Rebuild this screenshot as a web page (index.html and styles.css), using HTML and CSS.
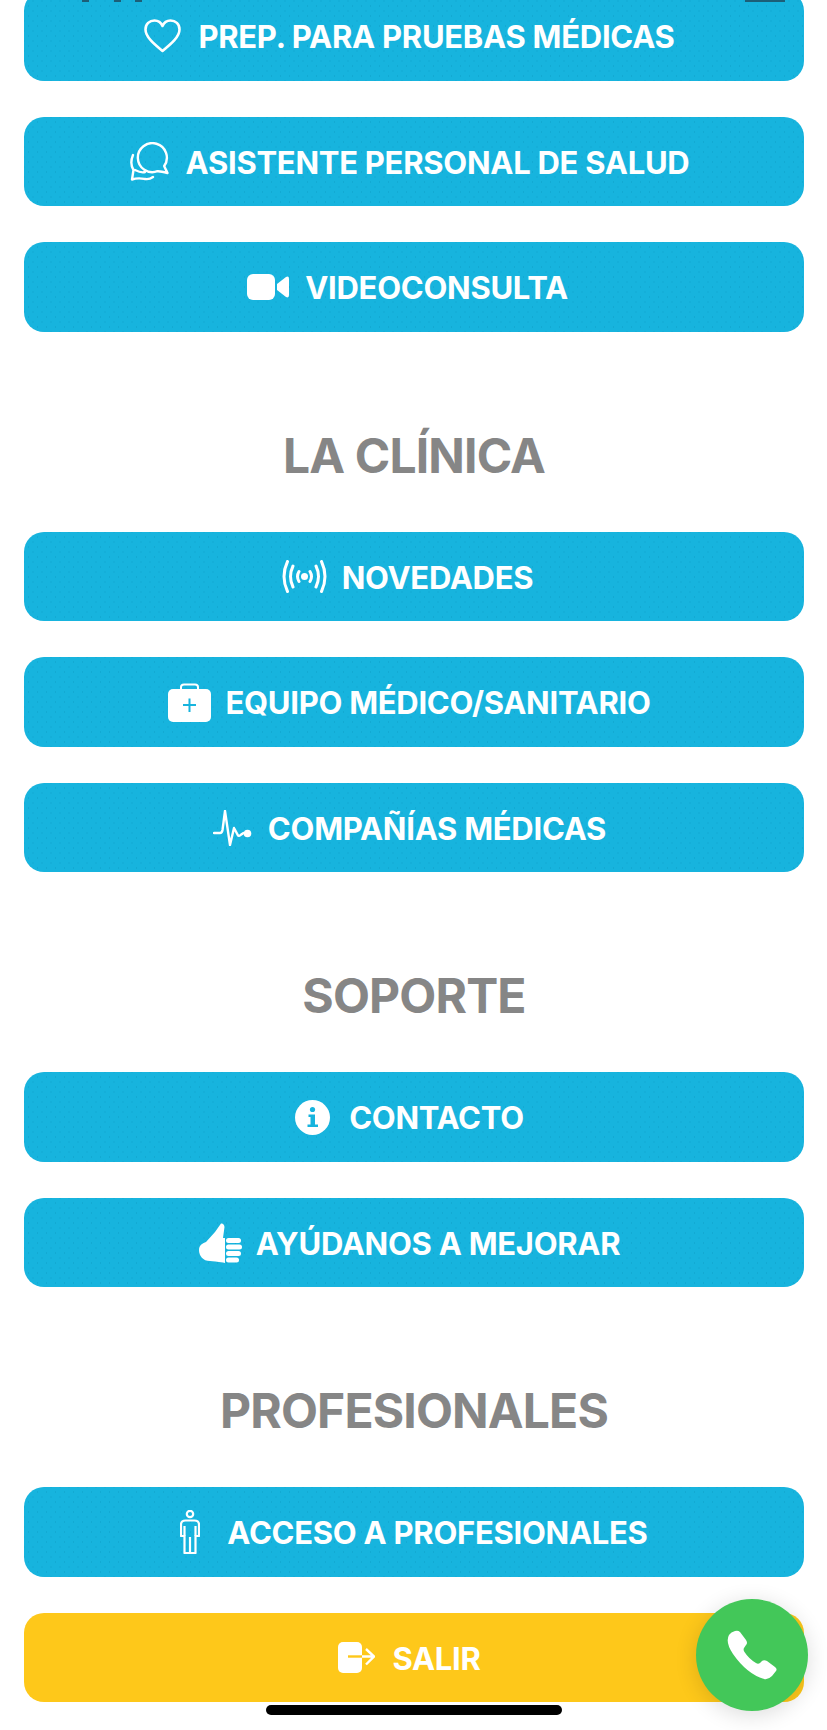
FILE: index.html
```html
<!DOCTYPE html>
<html>
<head>
  <title>Menu</title>
  <link rel="stylesheet" href="styles.css">
</head>
<body>
  <div class="status-bits">
    <span class="bit bit-a"></span>
    <span class="bit bit-b"></span>
    <span class="bit bit-c"></span>
    <span class="bit bit-battery"></span>
  </div>

  <div class="menu">
    <div class="group">
      <a class="btn" href="#">
        <svg width="37" height="34" viewBox="0 0 37 34" fill="none" stroke="#fff" stroke-width="2.600" stroke-linejoin="round"><path d="M18.5 32C10 25 1.5 18 1.5 10.5 1.5 5 5.5 1.5 10.5 1.5c3.500 0 6.500 2 8 5.500 1.500-3.500 4.500-5.500 8-5.500 5 0 9 3.500 9 9 0 7.500-8.500 14.500-17 21.500z"/></svg>
        <span>PREP. PARA PRUEBAS MÉDICAS</span>
      </a>
      <a class="btn" href="#">
        <svg width="39" height="39" viewBox="0 0 39 39" fill="none" stroke="#fff" stroke-width="2.400" stroke-linecap="round" stroke-linejoin="round"><path d="M34.200 24A14.500 14.500 0 1 0 27.500 29.200C30 29 34 30 37.500 31 36 28 35 26 34.200 24z"/><path d="M3 13C.5 19 1 24 3.500 28L2 37.500C8 35.500 12 36.500 15 37 18 37.500 21 36.500 23 35"/><path d="M5 28C9 30 12 31 15 30"/></svg>
        <span>ASISTENTE PERSONAL DE SALUD</span>
      </a>
      <a class="btn btn-left" href="#">
        <svg class="tight" width="43" height="26" viewBox="0 0 43 26" fill="#fff"><rect width="28" height="26" rx="6"/><path d="M30 10l9-7q3-1.500 3 2v16q0 3.500-3 2l-9-7z"/></svg>
        <span>VIDEOCONSULTA</span>
      </a>
    </div>

    <h2>LA CLÍNICA</h2>
    <div class="group">
      <a class="btn btn-left" href="#">
        <svg class="tight" width="45" height="33" viewBox="0 0 45 33" fill="none" stroke="#fff" stroke-width="3" stroke-linecap="round"><circle cx="22.500" cy="16.500" r="3.500" fill="#fff" stroke="none"/><path d="M17 11.500q-3 5 0 10M28 11.500q3 5 0 10M11 6q-5 10.500 0 21M34 6q5 10.500 0 21M5.500 1.500q-7 15 0 30M39.500 1.500q7 15 0 30"/></svg>
        <span>NOVEDADES</span>
      </a>
      <a class="btn" href="#">
        <svg class="tighter" width="43" height="39" viewBox="0 0 43 39"><path d="M13 7V4q0-2.500 3-2.500h11q3 0 3 2.500v3" fill="none" stroke="#fff" stroke-width="2"/><rect y="6" width="43" height="33" rx="5" fill="#fff"/><path d="M21.500 15.500V29M15 22h13" stroke="#17b4de" stroke-width="2"/></svg>
        <span>EQUIPO MÉDICO/SANITARIO</span>
      </a>
      <a class="btn" href="#">
        <svg class="snug" width="39" height="36" viewBox="0 0 39 36" fill="none" stroke="#fff" stroke-width="2.400" stroke-linecap="round" stroke-linejoin="round"><path d="M1 23h6q2 0 2.500-3L12 1l5 34 4-17 3.500 6.500q1 2.500 3 0.500l3-2"/><circle cx="34.500" cy="23.500" r="3.800" fill="#fff" stroke="none"/></svg>
        <span>COMPAÑÍAS MÉDICAS</span>
      </a>
    </div>

    <h2>SOPORTE</h2>
    <div class="group">
      <a class="btn" href="#">
        <svg class="wide" width="35" height="35" viewBox="0 0 35 35"><circle cx="17.500" cy="17.500" r="17.500" fill="#fff"/><circle cx="17.500" cy="9.500" r="2.600" fill="#17b4de"/><path d="M13.500 14.500h6.500v10h3v2.500H12.500v-2.500h3v-7.500h-2z" fill="#17b4de"/></svg>
        <span>CONTACTO</span>
      </a>
      <a class="btn" href="#">
        <svg class="tighter" width="43" height="40" viewBox="0 0 43 40" fill="#fff"><path d="M16 9l6-8.500q3-.5 3.500 3.500L24 15h2v25l-2-.5c-6-.5-10-1.500-13-1.500-7 0-11-5-11-11 0-5 4-7 7-8z"/><rect x="27" y="15" width="15" height="5" rx="2.500"/><rect x="27" y="21.500" width="16" height="5" rx="2.500"/><rect x="27" y="28" width="15" height="5" rx="2.500"/><rect x="27" y="34.500" width="13" height="5" rx="2.500"/></svg>
        <span>AYÚDANOS A MEJORAR</span>
      </a>
    </div>

    <h2>PROFESIONALES</h2>
    <div class="group">
      <a class="btn" href="#">
        <svg class="person" width="20" height="44" viewBox="0 0 20 44" fill="none" stroke="#fff" stroke-width="2.200" stroke-linejoin="round"><circle cx="10" cy="4" r="3.200"/><path d="M5.500 10.500h9q4.500 0 4.500 4V26h-3.500v17h-11V26H1V14.500q0-4 4.500-4z"/><path d="M4.500 16v10M15.500 16v10M10 27v16"/></svg>
        <span>ACCESO A PROFESIONALES</span>
      </a>
      <a class="btn btn-yellow" href="#">
        <svg width="37" height="31" viewBox="0 0 37 31"><rect width="24" height="31" rx="5" fill="#fff"/><path d="M10 14.500h14" stroke="#fec81a" stroke-width="2.400"/><path d="M24 14.500h11M28 7l8 7.500-8 8" fill="none" stroke="#fff" stroke-width="2.400"/></svg>
        <span>SALIR</span>
      </a>
    </div>
  </div>

  <a class="call" href="#">
    <svg width="50" height="50" viewBox="0 0 50 50" fill="#fff"><path d="M8 1q3-1 5 1l6 8q2 3 0 5l-2 3q-1 2 .5 4 4.500 7 11.500 11 2 1.500 4 0l2-2q2-1.500 5 0l8 6q2.500 2 1 4l-4 5q-4 4-8 3Q20 44 6 24-2 12 2 5q2-3 6-4z"/></svg>
  </a>
  <div class="home-bar"></div>
</body>
</html>
```

FILE: styles.css
```css
html, body {
  margin: 0;
  padding: 0;
}

body {
  position: relative;
  height: 1730px;
  overflow: hidden;
  background: #fff;
  font-family: Inter, "Liberation Sans", sans-serif;
}

.menu {
  margin-top: -8.6px;
  padding: 0 23px 0 24px;
}

.group {
  display: flex;
  flex-direction: column;
  gap: 36px;
}

h2 {
  margin: 95px 0 47px;
  height: 58px;
  line-height: 58px;
  font-size: 48px;
  font-weight: 700;
  letter-spacing: -0.85px;
  color: #868686;
  text-align: center;
}

.btn {
  display: flex;
  align-items: center;
  justify-content: center;
  height: 89.5px;
  padding-right: 9px;
  border-radius: 20px;
  background-color: #17b4de;
  background-image:
    radial-gradient(circle, #13aad3 0.6px, transparent 1px),
    radial-gradient(circle, #13aad3 0.6px, transparent 1px);
  background-size: 9px 10px;
  background-position: 0 0, 4.5px 5px;
  color: #fff;
  font-size: 31px;
  font-weight: 700;
  letter-spacing: -0.27px;
  text-decoration: none;
}

.btn span {
  padding-top: 1px;
}

.btn svg {
  flex: none;
  margin-right: 17px;
}

.btn svg.snug {
  margin-right: 16px;
}

.btn svg.tight {
  margin-right: 15px;
}

.btn svg.tighter {
  margin-right: 14px;
}

.btn svg.wide {
  margin-right: 19px;
}

.btn svg.person {
  margin-left: 9px;
  margin-right: 27px;
}

.btn-left {
  padding-right: 13px;
}

.btn-yellow {
  background: #fec81a;
}

.call {
  position: absolute;
  left: 696px;
  top: 1599px;
  width: 112px;
  height: 112px;
  display: flex;
  align-items: center;
  justify-content: center;
  border-radius: 50%;
  background: #43c759;
  box-shadow: 0 4px 22px rgba(0, 0, 0, 0.14);
}

.home-bar {
  position: absolute;
  left: 266px;
  top: 1705px;
  width: 296px;
  height: 10px;
  border-radius: 5px;
  background: #000;
}

.status-bits .bit {
  position: absolute;
  top: 0;
  height: 2px;
  background: #1c5f78;
  z-index: 1;
}

.bit-a { left: 82px; width: 7px; }
.bit-b { left: 114px; width: 7px; }
.bit-c { left: 135px; width: 7px; }
.bit-battery { left: 745px; width: 40px; }
```
